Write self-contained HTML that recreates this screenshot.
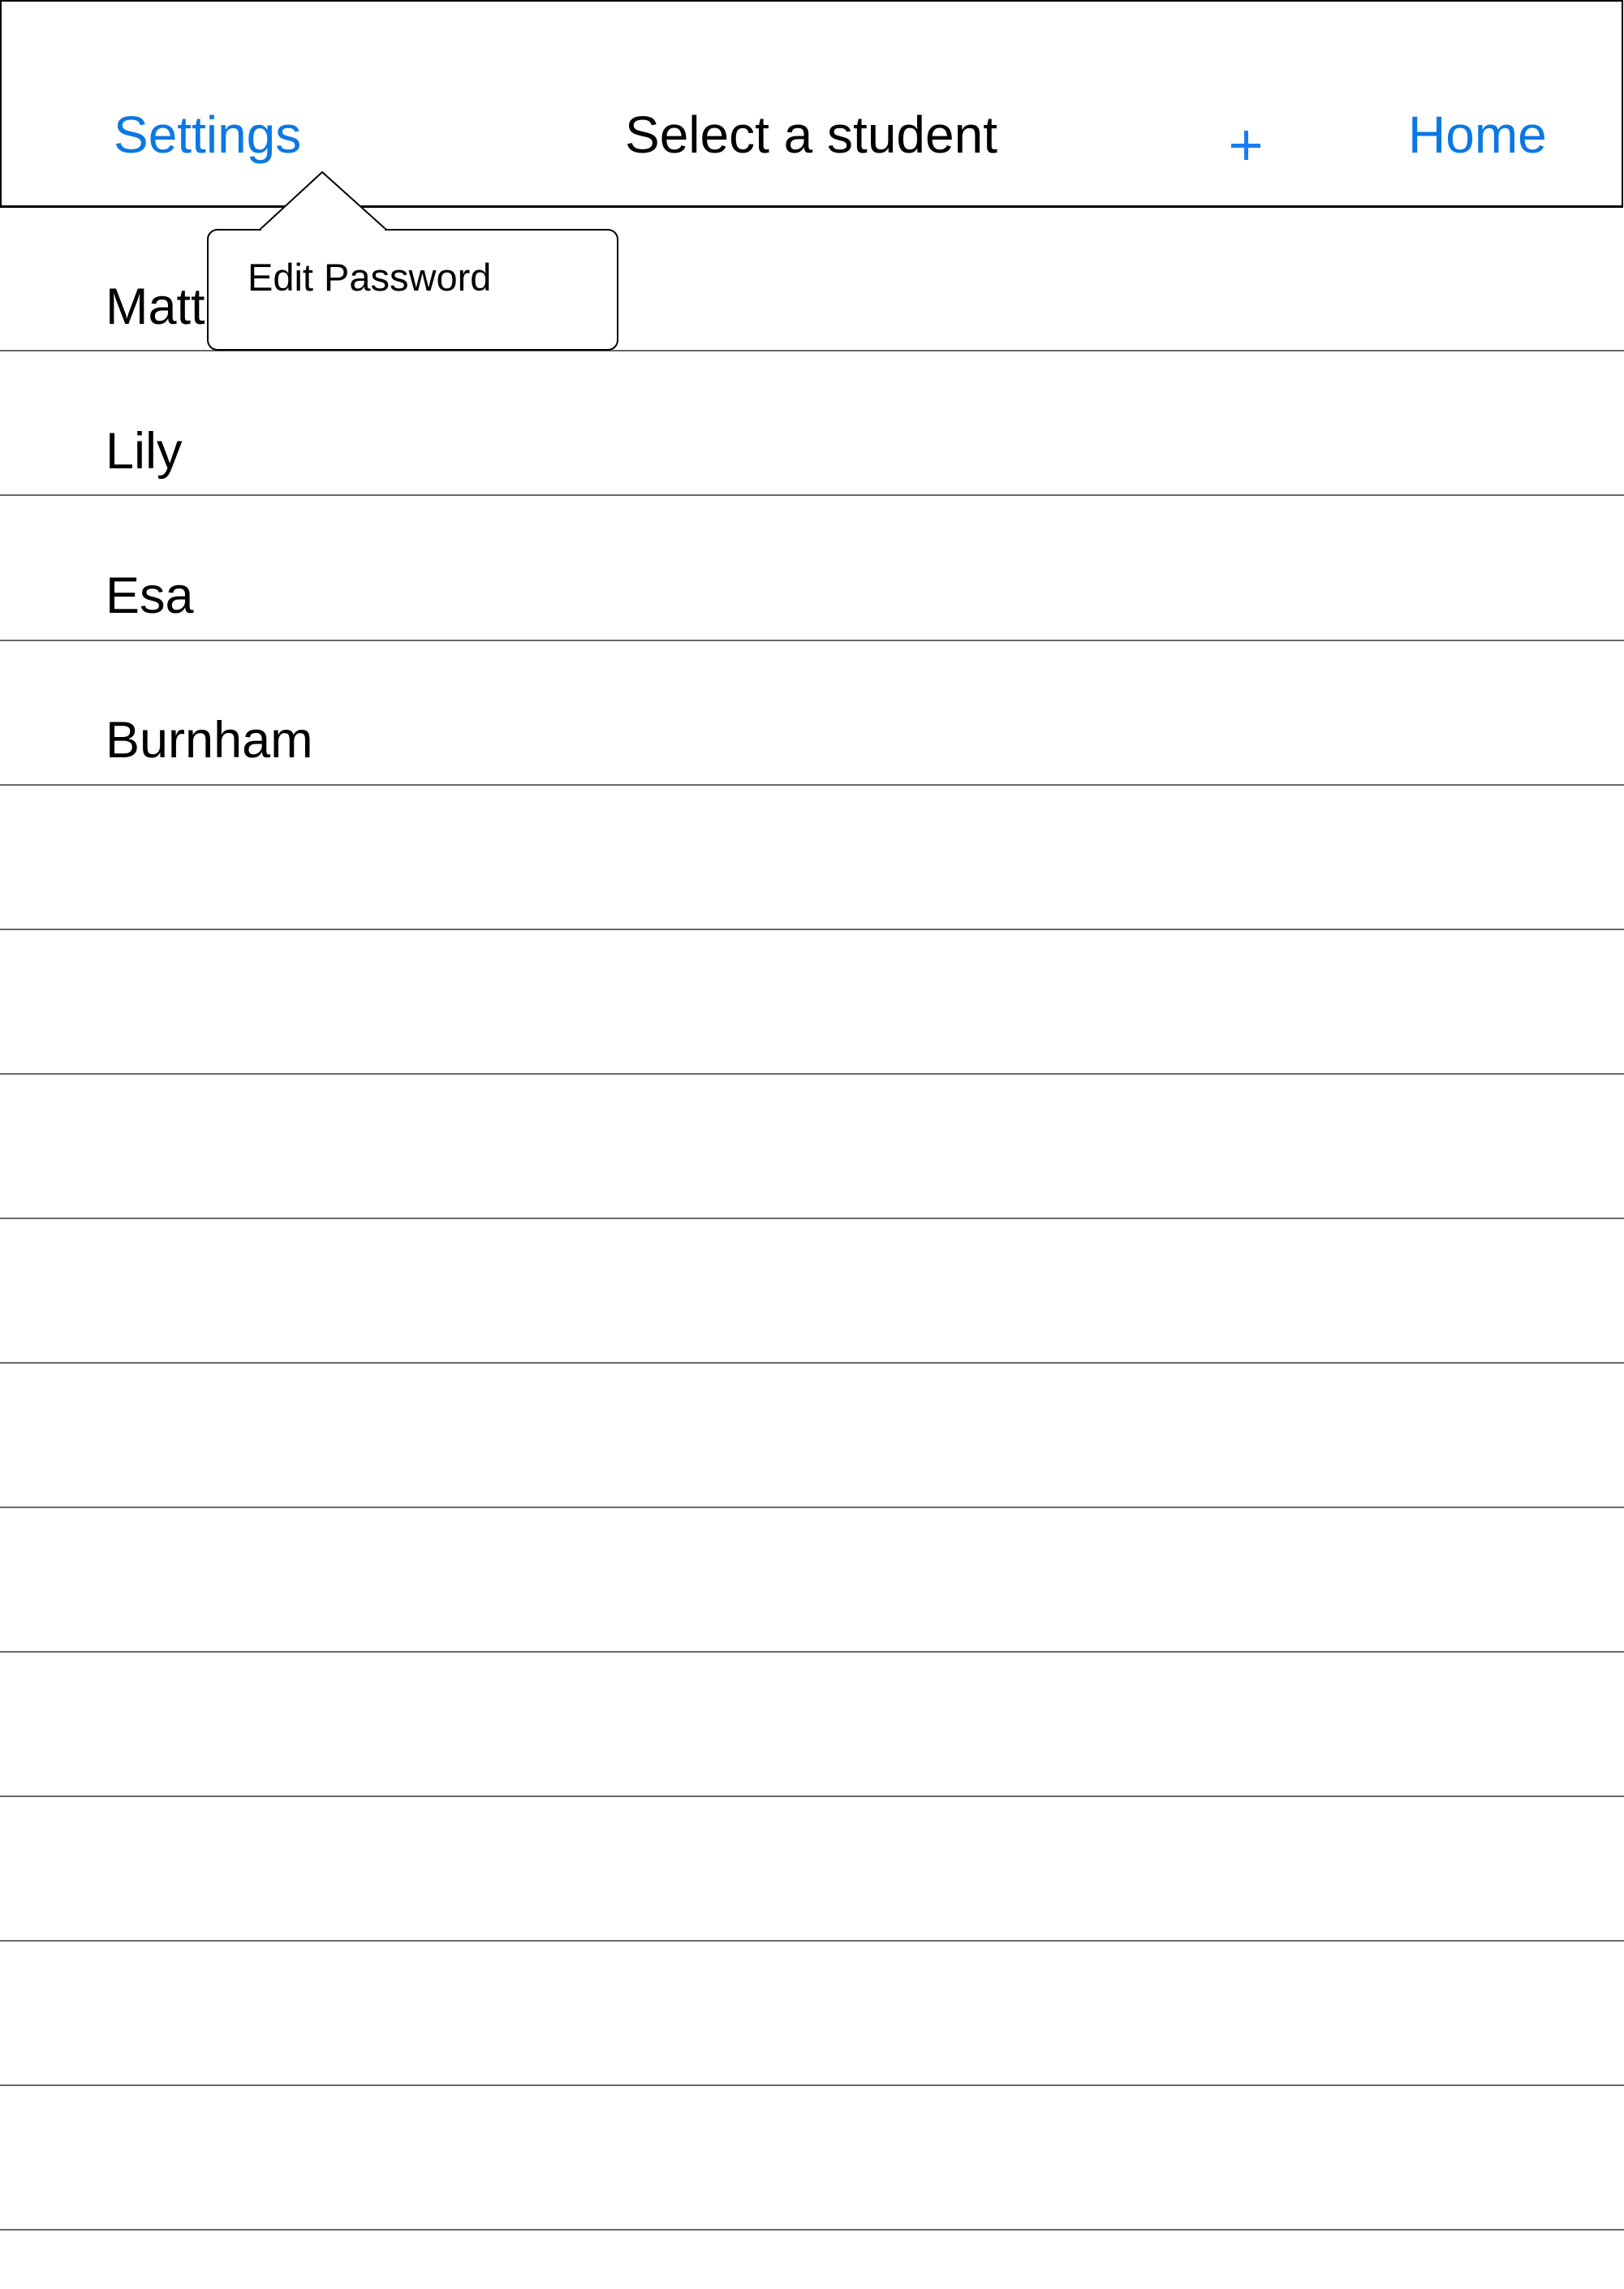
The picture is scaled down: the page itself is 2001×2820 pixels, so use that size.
<!DOCTYPE html>
<html><head><meta charset="utf-8"><style>
html,body{margin:0;padding:0;background:#fff;}
body{width:2001px;height:2820px;position:relative;overflow:hidden;font-family:"Liberation Sans",Arial,sans-serif;}
.t{position:absolute;white-space:nowrap;line-height:1;}
.line{position:absolute;left:0;width:2001px;height:2px;background:#6a6a6a;}
</style></head><body>
<div style="position:absolute;left:0;top:0;width:1996px;height:251px;border:2px solid #000;border-bottom-width:3px;"></div>
<div class="t" style="left:140px;top:134px;font-size:64px;color:#0b78e3;">Settings</div>
<div class="t" style="left:770px;top:134px;font-size:64px;color:#000;">Select a student</div>
<div class="t" style="left:1735px;top:134px;font-size:64px;color:#0b78e3;">Home</div>
<div style="position:absolute;left:1517px;top:177px;width:36px;height:5px;background:#1a7cf5;"></div>
<div style="position:absolute;left:1533px;top:161px;width:5px;height:36px;background:#1a7cf5;"></div>

<div class="line" style="top:431px"></div>
<div class="line" style="top:609px"></div>
<div class="line" style="top:788px"></div>
<div class="line" style="top:966px"></div>
<div class="line" style="top:1144px"></div>
<div class="line" style="top:1322px"></div>
<div class="line" style="top:1500px"></div>
<div class="line" style="top:1678px"></div>
<div class="line" style="top:1856px"></div>
<div class="line" style="top:2034px"></div>
<div class="line" style="top:2212px"></div>
<div class="line" style="top:2390px"></div>
<div class="line" style="top:2568px"></div>
<div class="line" style="top:2746px"></div>

<div class="t" style="left:130px;top:347px;font-size:63px;">Matt</div>
<div class="t" style="left:130px;top:525px;font-size:63px;">Lily</div>
<div class="t" style="left:130px;top:703px;font-size:63px;">Esa</div>
<div class="t" style="left:130px;top:881px;font-size:63px;">Burnham</div>

<svg style="position:absolute;left:0;top:0" width="2001" height="500">
<rect x="256" y="283" width="505" height="148" rx="12" ry="12" fill="#fff" stroke="#000" stroke-width="2"/>
<polygon points="320,283 397,212 476,283" fill="#fff" stroke="#000" stroke-width="2"/>
<line x1="322" y1="283" x2="474" y2="283" stroke="#fff" stroke-width="3"/>
</svg>
<div class="t" style="left:305px;top:318px;font-size:47px;">Edit Password</div>
</body></html>
